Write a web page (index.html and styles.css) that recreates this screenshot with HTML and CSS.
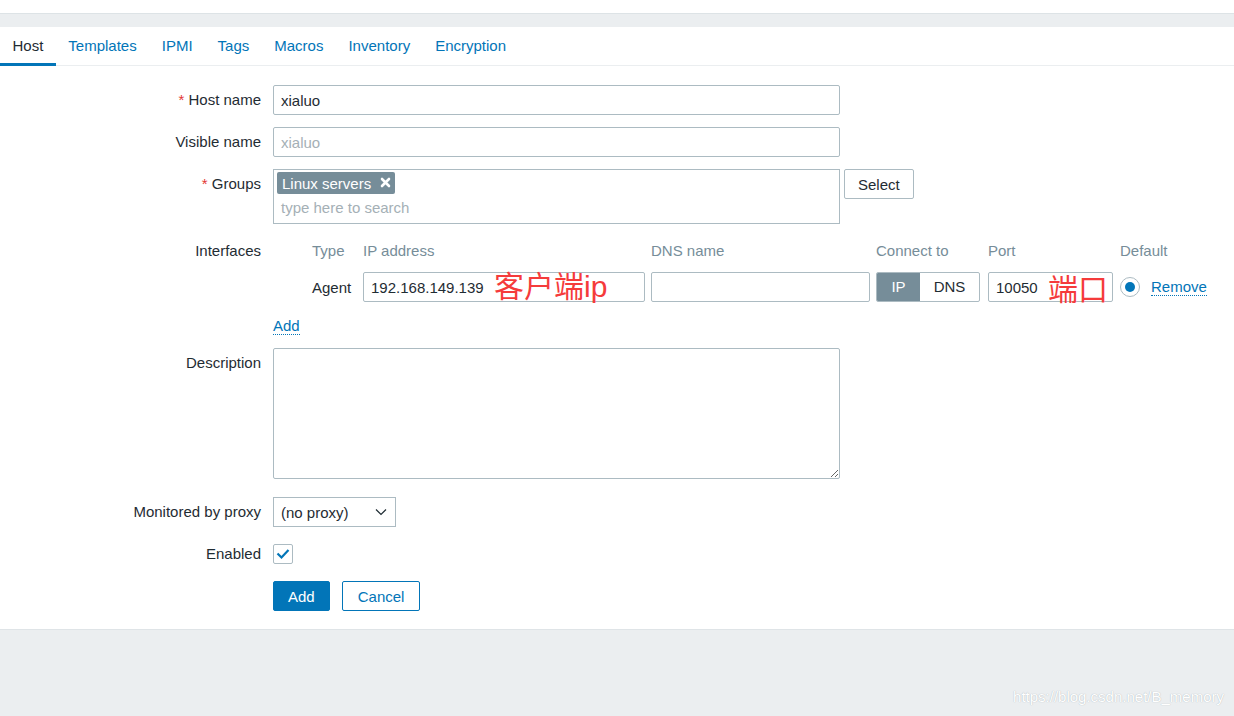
FILE: index.html
```html
<!DOCTYPE html>
<html lang="en">
<head>
  <meta charset="UTF-8">
  <title>Host configuration</title>
  <link rel="stylesheet" href="styles.css">
</head>
<body>
  <div class="topstrip"></div>
  <div class="subbar"></div>

  <main class="panel">
    <ul class="tabs">
      <li class="tab active">Host</li>
      <li class="tab">Templates</li>
      <li class="tab">IPMI</li>
      <li class="tab">Tags</li>
      <li class="tab">Macros</li>
      <li class="tab">Inventory</li>
      <li class="tab">Encryption</li>
    </ul>

    <form class="form-grid">
      <label class="lbl"><span class="req">*</span> Host name</label>
      <div class="field"><input class="text wide" type="text" value="xialuo"></div>

      <label class="lbl">Visible name</label>
      <div class="field"><input class="text wide" type="text" placeholder="xialuo"></div>

      <label class="lbl"><span class="req">*</span> Groups</label>
      <div class="field groups">
        <div class="multiselect">
          <span class="tag">Linux servers
            <svg class="tag-x" width="11" height="11" viewBox="0 0 11 11"><path d="M2 2L9 9M9 2L2 9" stroke="#fff" stroke-width="2.6" stroke-linecap="round"/></svg>
          </span>
          <div class="ms-search">type here to search</div>
        </div>
        <button type="button" class="btn-alt">Select</button>
      </div>

      <label class="lbl">Interfaces</label>
      <div class="field interfaces">
        <div class="if-grid">
          <span></span>
          <span class="if-head">Type</span>
          <span class="if-head">IP address</span>
          <span class="if-head">DNS name</span>
          <span class="if-head">Connect to</span>
          <span class="if-head">Port</span>
          <span class="if-head">Default</span>

          <span></span>
          <span class="if-type">Agent</span>
          <div class="cell">
            <input class="text ip" type="text" value="192.168.149.139">
            <span class="note note-ip">客户端ip</span>
          </div>
          <div class="cell"><input class="text dns" type="text"></div>
          <div class="cell">
            <div class="seg">
              <span class="seg-item on">IP</span>
              <span class="seg-item">DNS</span>
            </div>
          </div>
          <div class="cell">
            <input class="text port" type="text" value="10050">
            <span class="note note-port">端口</span>
          </div>
          <div class="cell default">
            <span class="radio"><span class="radio-dot"></span></span>
            <a class="link">Remove</a>
          </div>
        </div>
        <div class="if-add"><a class="link">Add</a></div>
      </div>

      <label class="lbl">Description</label>
      <div class="field"><textarea class="textarea"></textarea></div>

      <label class="lbl">Monitored by proxy</label>
      <div class="field">
        <div class="select">
          <span>(no proxy)</span>
          <svg width="12" height="8" viewBox="0 0 12 8"><path d="M1 1.5L6 6.5L11 1.5" fill="none" stroke="#1f2c33" stroke-width="1.2"/></svg>
        </div>
      </div>

      <label class="lbl">Enabled</label>
      <div class="field check-field">
        <span class="checkbox">
          <svg width="14" height="12" viewBox="0 0 14 12"><path d="M1.5 5.5L5.5 9.5L12.5 2" fill="none" stroke="#0275b8" stroke-width="2.2"/></svg>
        </span>
      </div>

      <span></span>
      <div class="field actions">
        <button type="button" class="btn">Add</button>
        <button type="button" class="btn-outline">Cancel</button>
      </div>
    </form>
  </main>

  <footer class="footer">
    <span class="watermark">https://blog.csdn.net/B_memory</span>
  </footer>
</body>
</html>
```

FILE: styles.css
```css
html, body {
  margin: 0;
  padding: 0;
}

body {
  font-family: "Liberation Sans", Arial, sans-serif;
  font-size: 15px;
  color: #1f2c33;
  background-color: #ebeef0;
  min-height: 716px;
}

.topstrip {
  height: 13px;
  background-color: #ffffff;
}

.subbar {
  height: 13px;
  background-color: #ebeef0;
  border-top: 1px solid #dde3e6;
}

.panel {
  background-color: #ffffff;
  border-bottom: 1px solid #dfe4e7;
}

/* tabs */
.tabs {
  display: flex;
  list-style: none;
  margin: 0;
  padding: 0;
  height: 38px;
  border-bottom: 1px solid #ebeef0;
}

.tab {
  height: 36px;
  line-height: 37px;
  padding: 0 12.5px;
  color: #0275b8;
  border-bottom: 3px solid transparent;
  margin-bottom: -1px;
}

.tab.active {
  color: #1f2c33;
  border-bottom-color: #0275b8;
}

/* form */
.form-grid {
  display: grid;
  grid-template-columns: 261px 1fr;
  column-gap: 12px;
  row-gap: 12px;
  padding: 19px 0 18px;
  margin: 0;
}

.lbl {
  text-align: right;
  line-height: 30px;
  align-self: start;
  white-space: nowrap;
}

.req {
  color: #e33734;
}

.field {
  display: flex;
  align-items: flex-start;
}

.text {
  box-sizing: border-box;
  height: 30px;
  padding: 0 7px;
  border: 1px solid #acbbc2;
  border-radius: 2px;
  font-family: inherit;
  font-size: 15px;
  color: #1f2c33;
  background-color: #ffffff;
  outline: none;
}

.text::placeholder {
  color: #a5b0b6;
}

.wide {
  width: 567px;
}

/* groups */
.multiselect {
  box-sizing: border-box;
  width: 567px;
  height: 55px;
  border: 1px solid #acbbc2;
  padding: 2px 3px;
}

.tag {
  display: inline-flex;
  align-items: center;
  gap: 9px;
  height: 22px;
  padding: 0 4px 0 5px;
  background-color: #768d99;
  color: #ffffff;
  border-radius: 2px;
}

.tag-x {
  margin-top: -2px;
}

.ms-search {
  color: #a5b0b6;
  line-height: 28px;
  padding-left: 4px;
}

.btn-alt {
  box-sizing: border-box;
  height: 30px;
  margin-left: 4px;
  padding: 0 13px;
  font-family: inherit;
  font-size: 15px;
  color: #1f2c33;
  background-color: #ffffff;
  border: 1px solid #acbbc2;
  border-radius: 2px;
}

/* interfaces */
.interfaces {
  flex-direction: column;
}

.if-grid {
  display: grid;
  grid-template-columns: 39px 51px 288px 225px 112px 132px auto;
  grid-template-rows: 29px 30px;
  row-gap: 7px;
  align-items: center;
}

.if-head {
  color: #768d99;
}

.cell {
  position: relative;
  display: flex;
  align-items: center;
}

.ip {
  width: 282px;
}

.dns {
  width: 219px;
}

.port {
  width: 125px;
}

.note {
  position: absolute;
  top: 0;
  font-family: "Noto Sans CJK SC", sans-serif;
  font-size: 30px;
  line-height: 30px;
  color: #f53b3b;
  white-space: nowrap;
}

.note-ip {
  left: 131px;
  font-family: "Liberation Sans", "Noto Sans CJK SC", sans-serif;
}

.note-port {
  left: 60px;
}

.seg {
  display: flex;
  box-sizing: border-box;
  width: 104px;
  height: 30px;
  border: 1px solid #acbbc2;
  border-radius: 2px;
  overflow: hidden;
}

.seg-item {
  flex: 1;
  text-align: center;
  line-height: 28px;
}

.seg-item.on {
  flex: 0 0 43px;
  background-color: #768d99;
  color: #ffffff;
}

.default {
  gap: 11px;
}

.radio {
  box-sizing: border-box;
  width: 20px;
  height: 20px;
  border: 1px solid #acbbc2;
  border-radius: 50%;
  display: flex;
  align-items: center;
  justify-content: center;
}

.radio-dot {
  width: 10px;
  height: 10px;
  border-radius: 50%;
  background-color: #0275b8;
}

.link {
  color: #0275b8;
  border-bottom: 1px dotted #0275b8;
  line-height: 17px;
}

.if-add {
  margin-top: 14px;
  line-height: 20px;
  height: 20px;
}

/* description */
.textarea {
  box-sizing: border-box;
  display: block;
  width: 567px;
  height: 131px;
  margin-bottom: 6px;
  border: 1px solid #acbbc2;
  border-radius: 2px;
  font-family: inherit;
  font-size: 15px;
  resize: both;
}

/* proxy select */
.select {
  box-sizing: border-box;
  width: 123px;
  height: 30px;
  padding: 0 8px 0 7px;
  border: 1px solid #acbbc2;
  display: flex;
  align-items: center;
  justify-content: space-between;
}

.check-field {
  height: 30px;
  align-items: center;
}

.checkbox {
  box-sizing: border-box;
  width: 20px;
  height: 20px;
  border: 1px solid #acbbc2;
  border-radius: 2px;
  display: flex;
  align-items: center;
  justify-content: center;
}

.actions {
  gap: 12px;
}

.btn {
  box-sizing: border-box;
  height: 30px;
  padding: 0 14px;
  font-family: inherit;
  font-size: 15px;
  color: #ffffff;
  background-color: #0275b8;
  border: 1px solid #0275b8;
  border-radius: 2px;
}

.btn-outline {
  box-sizing: border-box;
  height: 30px;
  padding: 0 15px;
  font-family: inherit;
  font-size: 15px;
  color: #0275b8;
  background-color: #ffffff;
  border: 1px solid #0275b8;
  border-radius: 2px;
}

.footer {
  height: 87px;
  display: flex;
  justify-content: flex-end;
  align-items: flex-end;
  padding: 0 10px 0;
}

.watermark {
  color: #ffffff;
  text-shadow: 0 0 1px #9ea8ae;
  font-size: 15px;
  margin-bottom: 12px;
}
```
